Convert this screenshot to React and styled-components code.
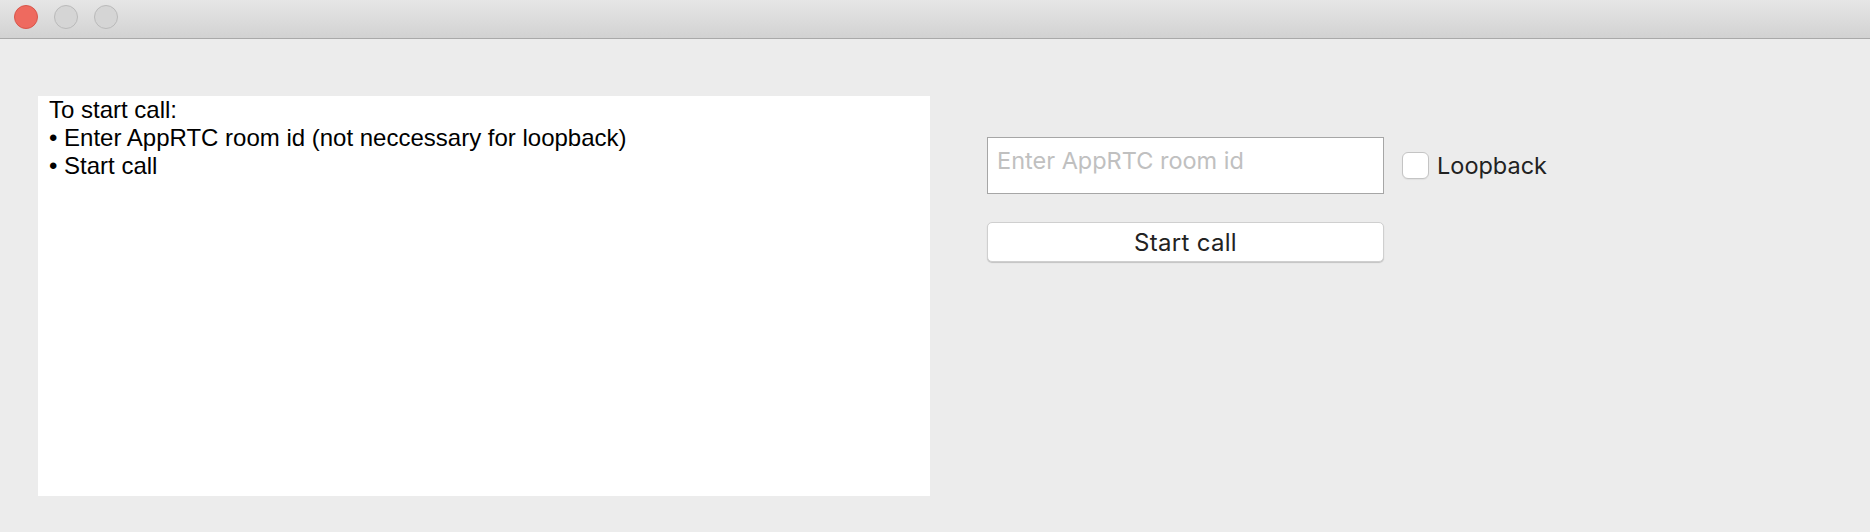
import React from 'react'
import styled, { createGlobalStyle } from 'styled-components'

const GlobalStyle = createGlobalStyle`
  html, body {
    margin: 0;
    padding: 0;
    background: #ececec;
  }
  body {
    width: 1870px;
    height: 532px;
    overflow: hidden;
    font-family: Inter, "Liberation Sans", sans-serif;
  }
`

const Window = styled.div`
  width: 1870px;
  height: 532px;
  background: #ececec;
`

const TitleBar = styled.div`
  height: 38px;
  display: flex;
  align-items: center;
  gap: 16px;
  padding-left: 14px;
  background: linear-gradient(#e6e6e6, #d2d2d2);
  border-bottom: 1px solid #a9a9a9;
`

const Light = styled.span`
  width: 22px;
  height: 22px;
  border-radius: 50%;
  margin-top: -4px;
  background: ${p => (p.$red ? '#ee6a5f' : '#d5d5d5')};
  border: 1px solid ${p => (p.$red ? '#d8564b' : '#bababa')};
`

const Content = styled.div`
  display: flex;
  align-items: flex-start;
  gap: 57px;
  padding: 57px 0 0 38px;
`

const LogPanel = styled.div`
  width: 881px;
  height: 400px;
  padding: 0 0 0 11px;
  background: #fff;
  font-family: "Liberation Sans", Arial, sans-serif;
  font-size: 24px;
  line-height: 28px;
  color: #000;
`

const LogLine = styled.div`
  white-space: pre;
`

const Controls = styled.div`
  display: flex;
  flex-direction: column;
  padding-top: 41px;
  gap: 28px;
`

const Row = styled.div`
  display: flex;
  align-items: center;
`

const RoomInput = styled.input`
  box-sizing: border-box;
  width: 397px;
  height: 57px;
  margin: 0;
  padding: 9px 0 20px 9px;
  border: 1px solid #a6a6a6;
  border-radius: 0;
  background: #fff;
  outline: none;
  font-family: Inter, "Liberation Sans", sans-serif;
  font-size: 23.5px;
  color: #222;
  &::placeholder {
    color: #c0c0c0;
  }
`

const CheckLabel = styled.label`
  display: flex;
  align-items: center;
  gap: 8px;
  margin-left: 18px;
  font-size: 23.5px;
  color: #222;
`

const Box = styled.span`
  box-sizing: border-box;
  width: 27px;
  height: 27px;
  border-radius: 6px;
  background: #fff;
  border: 1px solid #c4c4c4;
  box-shadow: 0 1px 1px rgba(0, 0, 0, 0.05);
`

const Button = styled.button`
  box-sizing: border-box;
  width: 397px;
  height: 40px;
  margin: 0;
  padding: 0;
  border: 1px solid #cfcfcf;
  border-radius: 5px;
  background: #fff;
  box-shadow: 0 1px 1px rgba(0, 0, 0, 0.18);
  font-family: Inter, "Liberation Sans", sans-serif;
  font-size: 24px;
  letter-spacing: 0.3px;
  color: #222;
`

export default function App() {
  return (
    <Window>
      <GlobalStyle />
      <TitleBar>
        <Light $red />
        <Light />
        <Light />
      </TitleBar>
      <Content>
        <LogPanel>
          <LogLine>To start call:</LogLine>
          <LogLine>• Enter AppRTC room id (not neccessary for loopback)</LogLine>
          <LogLine>• Start call</LogLine>
        </LogPanel>
        <Controls>
          <Row>
            <RoomInput placeholder="Enter AppRTC room id" />
            <CheckLabel>
              <Box />
              Loopback
            </CheckLabel>
          </Row>
          <Button>Start call</Button>
        </Controls>
      </Content>
    </Window>
  )
}
